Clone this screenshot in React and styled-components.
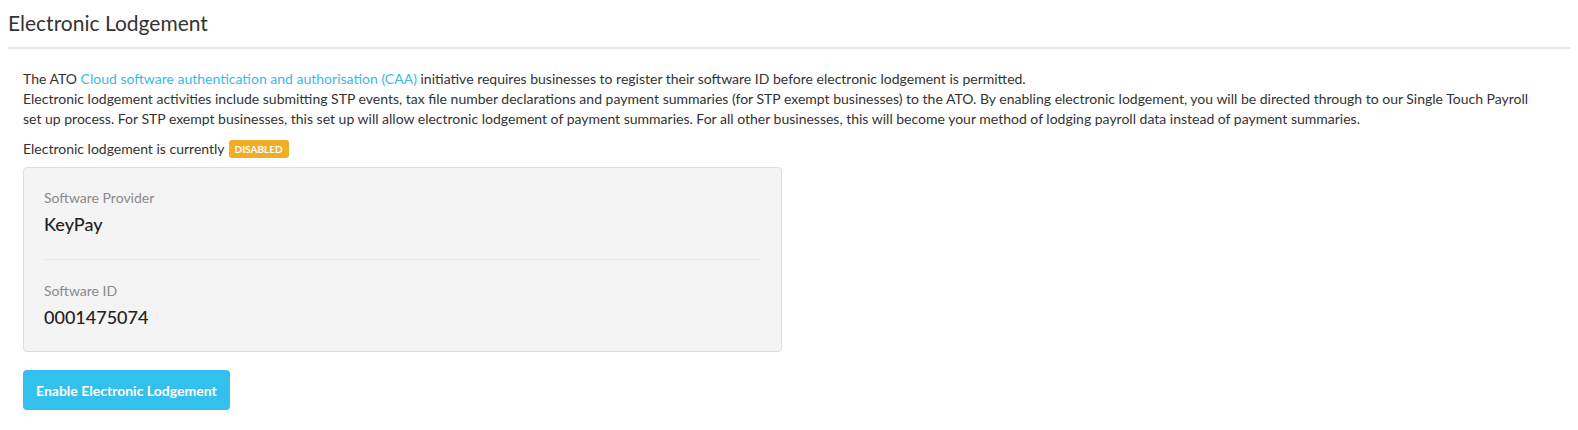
import React from "react";
import styled, { createGlobalStyle } from "styled-components";

const Global = createGlobalStyle`
  body {
    margin: 8px;
    background: #fff;
    font-family: "Lato", "Open Sans", Arial, sans-serif;
    color: #333;
  }
`;

const Page = styled.div`
  display: flex;
  flex-direction: column;
`;

const Header = styled.h2`
  margin: 0;
  padding: 2px 0 11px;
  font-size: 21px;
  font-weight: 400;
  line-height: 26px;
  color: #333;
  border-bottom: 2px solid #e6e6e6;
`;

const Content = styled.div`
  padding: 20px 15px 0;
  display: flex;
  flex-direction: column;
  align-items: flex-start;
`;

const Para = styled.p`
  margin: 0;
  max-width: 1506px;
  font-size: 14px;
  line-height: 20px;
  color: #333;
`;

const Link = styled.a`
  color: #3bb9e8;
  text-decoration: none;
`;

const Status = styled.p`
  margin: 10px 0 0;
  font-size: 14px;
  line-height: 20px;
  display: flex;
  align-items: center;
  gap: 4px;
`;

const Badge = styled.span`
  display: inline-flex;
  align-items: center;
  height: 18px;
  padding: 0 6px;
  border-radius: 3px;
  background: #f0ad25;
  color: #fff;
  font-size: 10px;
  font-weight: 700;
`;

const Panel = styled.div`
  margin-top: 8px;
  width: 717px;
  padding: 0 20px;
  background: #f4f4f4;
  border: 1px solid #dedede;
  border-radius: 4px;
`;

const Field = styled.div`
  padding: ${(p) => (p.first ? "21px 0 24px" : "22px 0 23px")};
  border-top: ${(p) => (p.first ? "none" : "1px solid #e8e8e8")};
`;

const Label = styled.div`
  font-size: 14px;
  line-height: 18px;
  color: #8a8a8a;
`;

const Value = styled.div`
  margin-top: 6px;
  font-size: 18px;
  line-height: 22px;
  color: #222;
  font-weight: 500;
`;

const Button = styled.button`
  margin-top: 18px;
  height: 40px;
  padding: 0 13px;
  border: none;
  border-radius: 4px;
  background: #33c0ef;
  color: #fff;
  font-family: inherit;
  font-size: 14px;
  font-weight: 700;
  cursor: pointer;
`;

export default function App() {
  return (
    <Page>
      <Global />
      <Header>Electronic Lodgement</Header>
      <Content>
        <Para>
          The ATO <Link href="#">Cloud software authentication and authorisation (CAA)</Link> initiative requires businesses to register their software ID before electronic lodgement is permitted.
          <br />
          Electronic lodgement activities include submitting STP events, tax file number declarations and payment summaries (for STP exempt businesses) to the ATO. By enabling electronic lodgement, you will be directed through to our Single Touch Payroll set up process. For STP exempt businesses, this set up will allow electronic lodgement of payment summaries. For all other businesses, this will become your method of lodging payroll data instead of payment summaries.
        </Para>
        <Status>
          Electronic lodgement is currently <Badge>DISABLED</Badge>
        </Status>
        <Panel>
          <Field first>
            <Label>Software Provider</Label>
            <Value>KeyPay</Value>
          </Field>
          <Field>
            <Label>Software ID</Label>
            <Value>0001475074</Value>
          </Field>
        </Panel>
        <Button>Enable Electronic Lodgement</Button>
      </Content>
    </Page>
  );
}
